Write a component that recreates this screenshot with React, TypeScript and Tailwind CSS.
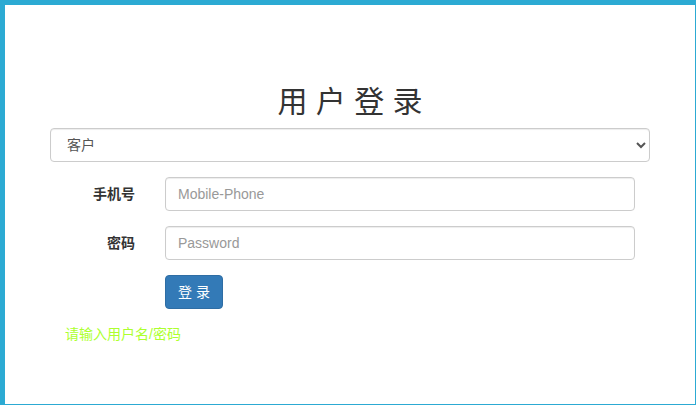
import { useState } from "react";
import type { FormEvent } from "react";

const controlClass =
  "block h-[34px] w-full rounded border border-[#cccccc] bg-white px-3 py-[6px] text-sm leading-5 text-[#555555] shadow-[inset_0_1px_1px_rgba(0,0,0,0.075)] outline-none placeholder:text-[#999999] focus:border-[#66afe9]";

type FieldProps = {
  id: string;
  label: string;
  type: string;
  placeholder: string;
};

function Field({ id, label, type, placeholder }: FieldProps) {
  const [value, setValue] = useState("");
  return (
    <div className="grid grid-cols-6">
      <label htmlFor={id} className="pt-[7px] pr-[15px] text-right font-bold">
        {label}
      </label>
      <div className="col-span-5 px-[15px]">
        <input
          id={id}
          type={type}
          placeholder={placeholder}
          value={value}
          onChange={(e) => setValue(e.target.value)}
          className={controlClass}
        />
      </div>
    </div>
  );
}

export default function App() {
  const handleSubmit = (e: FormEvent) => e.preventDefault();

  return (
    <main className="min-h-screen border-t-[5px] border-r border-b border-l-[5px] border-[#2caad3] bg-white px-[45px] pt-20 pb-10 font-['Liberation_Sans','Noto_Sans_CJK_SC',sans-serif] text-sm leading-5 text-[#333333]">
      <h1 className="mb-[10px] text-center text-[30px] leading-[33px]">用 户 登 录</h1>
      <form onSubmit={handleSubmit} className="flex flex-col gap-[15px]">
        <select aria-label="用户类型" className={controlClass}>
          <option>客户</option>
          <option>管理员</option>
        </select>
        <Field id="phone" label="手机号" type="text" placeholder="Mobile-Phone" />
        <Field id="password" label="密码" type="password" placeholder="Password" />
        <div className="grid grid-cols-6">
          <div className="col-span-5 col-start-2 px-[15px]">
            <button
              type="submit"
              className="block h-[34px] rounded border border-[#2e6da4] bg-[#337ab7] px-3 text-sm leading-5 text-white hover:bg-[#286090]"
            >
              登 录
            </button>
          </div>
        </div>
        <p className="px-[15px] text-[#adff2f]">请输入用户名/密码</p>
      </form>
    </main>
  );
}
